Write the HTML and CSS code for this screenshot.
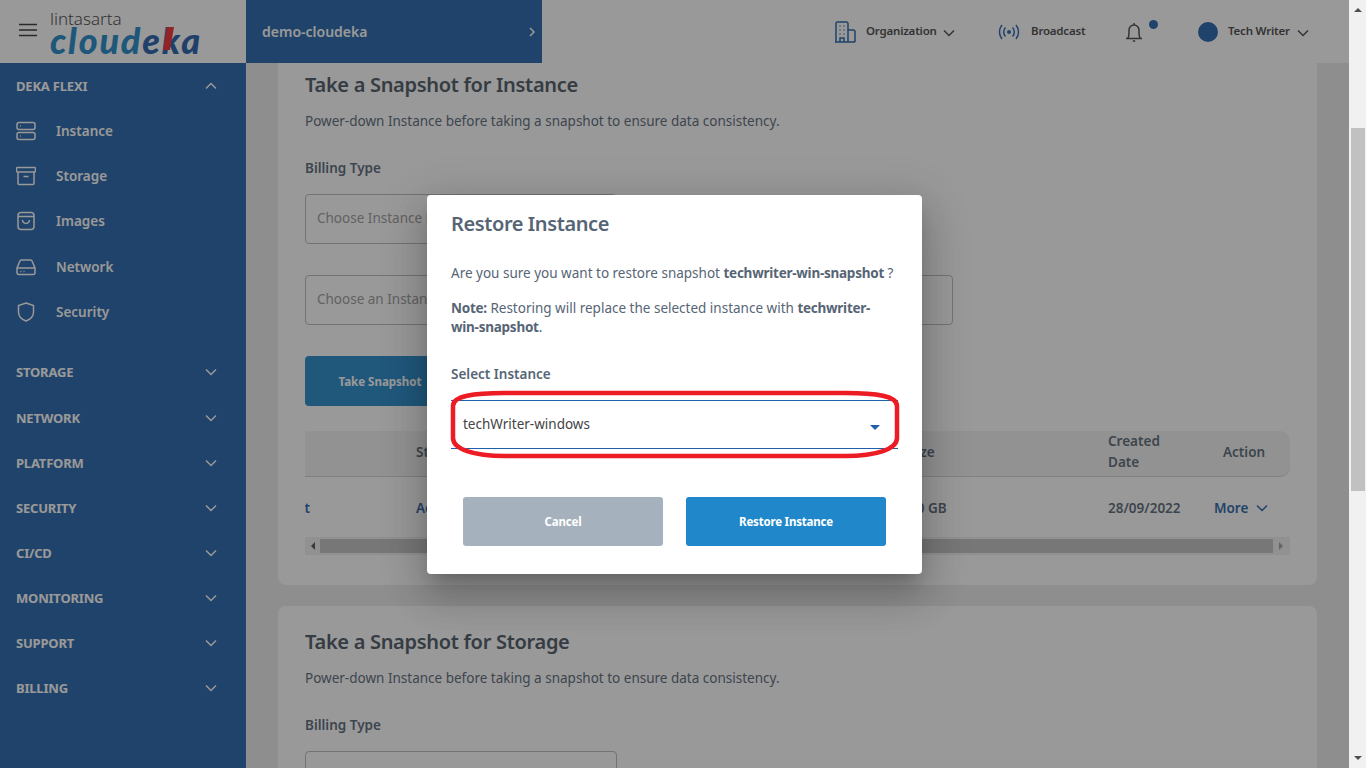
FILE: index.html
```html
<!DOCTYPE html>
<html lang="en">
<head>
    <meta charset="UTF-8">
    <title>Cloudeka - Snapshot</title>
    <link rel="stylesheet" href="styles.css">
</head>
<body>
    <div class="app">
        <header class="topbar">
            <div class="brand">
                <svg class="burger" width="20" height="14" viewBox="0 0 20 14"><path d="M1 1.500h18M1 7h18M1 12.500h18"/></svg>
                <div class="logo">
                    <span class="logo-top">lintasarta</span>
                    <span class="logo-main">cloud<span class="logo-dark">e<span class="logo-k">k</span>a</span></span>
                </div>
            </div>
            <div class="project">
                <span>demo-cloudeka</span>
                <svg width="8" height="12" viewBox="0 0 8 12"><path d="M2 2l4 4-4 4"/></svg>
            </div>
            <nav class="topnav">
                <div class="topnav-item org">
                    <svg class="blue-icon" width="22" height="22" viewBox="0 0 22 22"><path d="M2 21V2.500A1.500 1.500 0 0 1 3.500 1h9A1.500 1.500 0 0 1 14 2.500V21M14 9h5a2 2 0 0 1 2 2v10M1 21h20M6 21v-4h4v4M5.500 5h1M9.500 5h1M5.500 9h1M9.500 9h1M5.500 13h1M9.500 13h1"/></svg>
                    <span>Organization</span>
                    <svg class="chev" width="12" height="8" viewBox="0 0 12 8"><path d="M1 1.500l5 5 5-5"/></svg>
                </div>
                <div class="topnav-item cast">
                    <svg class="blue-icon" width="22" height="16" viewBox="0 0 22 16"><circle class="dot" cx="11" cy="8" r="2"/><path d="M7.500 3.500a6.500 6.500 0 0 0 0 9M14.500 3.500a6.500 6.500 0 0 1 0 9M4 1a11 11 0 0 0 0 14M18 1a11 11 0 0 1 0 14"/></svg>
                    <span>Broadcast</span>
                </div>
                <div class="bell">
                    <svg width="18" height="22" viewBox="0 0 18 22"><path d="M1 17.500h16M2.800 17.500c1-1.500 1.200-3 1.200-5.500V9a5 5 0 0 1 10 0v3c0 2.500.2 4 1.200 5.500M9 2v2M7.800 20h2.400"/></svg>
                    <i class="bell-dot"></i>
                </div>
                <div class="topnav-item user">
                    <i class="avatar"></i>
                    <span>Tech Writer</span>
                    <svg class="chev" width="12" height="8" viewBox="0 0 12 8"><path d="M1 1.500l5 5 5-5"/></svg>
                </div>
            </nav>
        </header>

        <div class="layout">
            <aside class="sidebar">
                <div class="side-group">DEKA FLEXI
                    <svg width="12" height="8" viewBox="0 0 12 8"><path d="M1 6.500l5-5 5 5"/></svg>
                </div>
                <div class="side-item">
                    <svg width="20" height="20" viewBox="0 0 20 20"><rect x="1" y="1.500" width="18" height="7" rx="2"/><rect x="1" y="11.500" width="18" height="7" rx="2"/><path d="M4 5h.800M4 15h.800"/></svg>
                    Instance
                </div>
                <div class="side-item">
                    <svg width="20" height="20" viewBox="0 0 20 20"><rect x="0.500" y="1.500" width="19" height="4.500" rx="1"/><path d="M2 6v11.500a1 1 0 0 0 1 1h14a1 1 0 0 0 1-1V6M7.500 10.500h5"/></svg>
                    Storage
                </div>
                <div class="side-item">
                    <svg width="20" height="20" viewBox="0 0 20 20"><rect x="2" y="1.500" width="16" height="17" rx="3"/><path d="M2 5.500h16M6.500 9c.500 4.500 6.500 4.500 7 0"/></svg>
                    Images
                </div>
                <div class="side-item">
                    <svg width="20" height="20" viewBox="0 0 20 20"><path d="M1 11l2.700-6.500A2 2 0 0 1 5.500 3h9a2 2 0 0 1 1.800 1.500L19 11v4.500a2 2 0 0 1-2 2H3a2 2 0 0 1-2-2zM1 11h18M4.500 14.500h1M7.500 14.500h1"/></svg>
                    Network
                </div>
                <div class="side-item">
                    <svg width="20" height="20" viewBox="0 0 20 20"><path d="M10 1l7.500 2.500v6.500c0 4.500-3.500 7.500-7.500 9-4-1.500-7.500-4.500-7.500-9V3.500z"/></svg>
                    Security
                </div>
                <div class="side-group first-closed">STORAGE <svg width="12" height="8" viewBox="0 0 12 8"><path d="M1 1.500l5 5 5-5"/></svg></div>
                <div class="side-group">NETWORK <svg width="12" height="8" viewBox="0 0 12 8"><path d="M1 1.500l5 5 5-5"/></svg></div>
                <div class="side-group">PLATFORM <svg width="12" height="8" viewBox="0 0 12 8"><path d="M1 1.500l5 5 5-5"/></svg></div>
                <div class="side-group">SECURITY <svg width="12" height="8" viewBox="0 0 12 8"><path d="M1 1.500l5 5 5-5"/></svg></div>
                <div class="side-group">CI/CD <svg width="12" height="8" viewBox="0 0 12 8"><path d="M1 1.500l5 5 5-5"/></svg></div>
                <div class="side-group">MONITORING <svg width="12" height="8" viewBox="0 0 12 8"><path d="M1 1.500l5 5 5-5"/></svg></div>
                <div class="side-group">SUPPORT <svg width="12" height="8" viewBox="0 0 12 8"><path d="M1 1.500l5 5 5-5"/></svg></div>
                <div class="side-group">BILLING <svg width="12" height="8" viewBox="0 0 12 8"><path d="M1 1.500l5 5 5-5"/></svg></div>
            </aside>

            <main class="content">
                <section class="card">
                    <h2>Take a Snapshot for Instance</h2>
                    <p class="hint">Power-down Instance before taking a snapshot to ensure data consistency.</p>
                    <label class="field-label">Billing Type</label>
                    <div class="input billing">Choose Instance Billing Type</div>
                    <div class="input instance">Choose an Instance</div>
                    <button class="snap-btn">Take Snapshot</button>
                    <div class="table-wrap">
                        <div class="table-inner">
                            <div class="t-row t-head">
                                <span>Name</span>
                                <span>Status</span>
                                <span>Instance</span>
                                <span>Size</span>
                                <span>Created<br>Date</span>
                                <span class="t-action">Action</span>
                            </div>
                            <div class="t-row t-body">
                                <span class="t-name">techwriter-win-snapshot</span>
                                <span class="t-status">Active</span>
                                <span>techWriter-windows</span>
                                <span>60 GB</span>
                                <span>28/09/2022</span>
                                <span class="t-more">More
                                    <svg width="12" height="8" viewBox="0 0 12 8"><path d="M1 1.500l5 5 5-5"/></svg>
                                </span>
                            </div>
                        </div>
                    </div>
                    <div class="hscroll">
                        <i class="arrow-left"></i>
                        <div class="hscroll-thumb"></div>
                        <i class="arrow-right"></i>
                    </div>
                </section>
                <section class="card second">
                    <h2>Take a Snapshot for Storage</h2>
                    <p class="hint">Power-down Instance before taking a snapshot to ensure data consistency.</p>
                    <label class="field-label">Billing Type</label>
                    <div class="input billing"></div>
                </section>
            </main>
        </div>

        <div class="overlay">
            <div class="modal">
                <h3>Restore Instance</h3>
                <p class="modal-text">Are you sure you want to restore snapshot <b>techwriter-win-snapshot</b> ?</p>
                <p class="modal-note"><b>Note:</b> Restoring will replace the selected instance with <b>techwriter-win-snapshot</b>.</p>
                <label class="modal-label">Select Instance</label>
                <div class="select">
                    <span>techWriter-windows</span>
                    <i class="select-arrow"></i>
                </div>
                <div class="modal-actions">
                    <button class="btn btn-cancel">Cancel</button>
                    <button class="btn btn-restore">Restore Instance</button>
                </div>
                <svg class="marker" width="495" height="379" viewBox="0 0 495 379"><path d="M78 198H418C450 198 470 201 470 211V243C470 254 450 261 418 261H78C46 261 26 254 26 243V211C26 201 46 198 78 198Z"/></svg>
            </div>
        </div>
    </div>

    <div class="vscroll">
        <i class="arrow-up"></i>
        <div class="vscroll-thumb"></div>
        <i class="arrow-down"></i>
    </div>
</body>
</html>
```

FILE: styles.css
```css
* {
    margin: 0;
    padding: 0;
    box-sizing: border-box;
}

body {
    font-family: "Noto Sans", sans-serif;
    display: flex;
    width: 1366px;
    height: 768px;
    overflow: hidden;
    background-color: #f1f1f1;
    color: #566575;
}

svg {
    fill: none;
    stroke: currentColor;
    stroke-width: 1.5;
    flex-shrink: 0;
}

.app {
    position: relative;
    width: 1349px;
    height: 768px;
    overflow: hidden;
    background-color: #ebebeb;
}

/* top bar */
.topbar {
    display: flex;
    height: 63px;
    background-color: #fff;
}

.brand {
    display: flex;
    align-items: center;
    width: 246px;
    padding-left: 18px;
    gap: 12px;
}

.burger {
    color: #333;
    margin-top: -3px;
}

.logo {
    display: flex;
    flex-direction: column;
    margin-top: 1px;
}

.logo-top {
    font-size: 17px;
    line-height: 17px;
    color: #444;
    font-weight: 300;
}

.logo-main {
    font-family: Lato, sans-serif;
    font-size: 36px;
    line-height: 27px;
    font-weight: 900;
    font-style: italic;
    letter-spacing: 1.8px;
    color: #1a86c5;
}

.logo-dark {
    color: #1f5ca8;
}

.logo-k {
    position: relative;
}

.logo-k::before {
    content: "";
    position: absolute;
    left: 3px;
    top: 9px;
    width: 7px;
    height: 23px;
    background-color: #f0282c;
    transform: skewX(-10deg);
}

.project {
    display: flex;
    align-items: center;
    justify-content: space-between;
    width: 296px;
    padding: 0 6px 0 16px;
    background-color: #1f60a8;
    color: #fff;
    font-size: 14px;
    font-weight: 600;
}

.topnav {
    display: flex;
    align-items: center;
    flex: 1;
    padding-left: 292px;
    font-size: 11.5px;
    letter-spacing: -0.2px;
    font-weight: 600;
    color: #444;
}

.topnav-item {
    display: flex;
    align-items: center;
}

.topnav-item span {
    margin-top: -2px;
}

.org {
    gap: 10px;
    width: 164px;
}

.org .chev {
    margin-left: -4px;
}

.cast {
    gap: 11px;
    width: 127px;
}

.blue-icon {
    color: #1f60a8;
}

.dot {
    fill: #1f60a8;
    stroke: none;
}

.chev {
    color: #444;
    margin-top: 3px;
}

.bell {
    position: relative;
    width: 73px;
    height: 22px;
    color: #444;
}

.bell-dot {
    position: absolute;
    top: -1px;
    left: 24px;
    width: 9px;
    height: 9px;
    border-radius: 50%;
    background-color: #1f60a8;
}

.user {
    gap: 10px;
}

.user .chev {
    margin-left: -3px;
}

.avatar {
    width: 20px;
    height: 20px;
    border-radius: 50%;
    background-color: #1f60a8;
}

/* sidebar */
.layout {
    display: flex;
    height: 705px;
}

.sidebar {
    width: 246px;
    background-color: #1f60a8;
    color: #fff;
    font-size: 13.5px;
    font-weight: 600;
}

.side-group {
    display: flex;
    align-items: center;
    justify-content: space-between;
    height: 45.15px;
    padding: 0 29px 0 16px;
    font-size: 13px;
    letter-spacing: -0.2px;
    font-weight: 700;
}

.side-item {
    display: flex;
    align-items: center;
    height: 45.3px;
    padding-left: 16px;
    gap: 20px;
}

.first-closed {
    margin-top: 15.3px;
}

/* page content */
.content {
    flex: 1;
    padding: 0 32px;
    overflow: hidden;
}

.card {
    height: 522px;
    padding: 9px 27px 0;
    background-color: #fff;
    border-radius: 0 0 8px 8px;
    margin-bottom: 21px;
}

.card.second {
    height: 300px;
    padding-top: 23px;
    border-radius: 8px 8px 0 0;
}

.card h2 {
    font-size: 20px;
    line-height: 26px;
    letter-spacing: -0.3px;
    font-weight: 600;
    color: #46535f;
}

.hint {
    margin-top: 13px;
    font-size: 13.5px;
    line-height: 20px;
}

.field-label {
    display: block;
    margin-top: 27px;
    font-size: 13.5px;
    line-height: 20px;
    font-weight: 600;
}

.input {
    display: flex;
    align-items: center;
    height: 50px;
    padding: 0 0 3px 11px;
    border: 1px solid #b9b9b9;
    border-radius: 4px;
    font-size: 13.5px;
    color: #999;
}

.billing {
    width: 312px;
    margin-top: 16px;
}

.instance {
    width: 648px;
    margin-top: 31px;
}

.snap-btn {
    display: block;
    width: 150px;
    height: 50px;
    margin-top: 31px;
    border: none;
    border-radius: 4px;
    background-color: #2088ca;
    color: #fff;
    font-family: inherit;
    font-size: 11.5px;
    font-weight: 700;
}

.table-wrap {
    margin-top: 25px;
    overflow: hidden;
}

.table-inner {
    margin-left: -160px;
}

.t-row {
    display: grid;
    grid-template-columns: 271px 200px 293px 199px 106px 115px;
    align-items: center;
    font-size: 13.5px;
    font-weight: 600;
}

.t-head {
    height: 46px;
    padding-bottom: 5px;
    line-height: 21px;
    background-color: #f0f3f1;
    border-bottom: 1px solid #cfd3d0;
    border-radius: 0 10px 10px 0;
}

.t-body {
    height: 60px;
    padding-top: 2px;
}

.t-name,
.t-status,
.t-more {
    color: #1f60a8;
}

.t-name {
    margin-left: 3px;
}

.t-action {
    padding-left: 9px;
}

.t-more {
    display: flex;
    align-items: center;
    gap: 8px;
}

.hscroll {
    display: flex;
    align-items: center;
    height: 18px;
    background-color: #f1f1f1;
}

.arrow-left,
.arrow-right {
    width: 0;
    height: 0;
    border-top: 4px solid transparent;
    border-bottom: 4px solid transparent;
}

.arrow-left {
    margin: 0 5px 0 6px;
    border-right: 4px solid #505050;
}

.arrow-right {
    margin: 0 7px 0 6px;
    border-left: 4px solid #a0a0a0;
}

.hscroll-thumb {
    flex: 1;
    height: 14px;
    background-color: #c1c1c1;
}

/* restore dialog */
.overlay {
    position: absolute;
    inset: 0;
    display: flex;
    align-items: center;
    justify-content: center;
    background-color: rgba(33, 33, 33, 0.46);
}

.modal {
    position: relative;
    width: 495px;
    height: 379px;
    padding: 16px 24px 0;
    background-color: #fff;
    border-radius: 4px;
    box-shadow: 0 11px 15px -7px rgba(0, 0, 0, 0.2), 0 24px 38px 3px rgba(0, 0, 0, 0.14), 0 9px 46px 8px rgba(0, 0, 0, 0.12);
}

.modal h3 {
    font-size: 20px;
    line-height: 26px;
    letter-spacing: -0.4px;
    font-weight: 600;
}

.modal-text {
    margin-top: 26px;
    font-size: 13.5px;
    line-height: 20px;
}

.modal-text b,
.modal-note b {
    letter-spacing: -0.25px;
}

.modal-note {
    margin-top: 16px;
    padding-right: 10px;
    font-size: 13.5px;
    line-height: 19px;
}

.modal-label {
    display: block;
    margin-top: 27px;
    font-size: 13.5px;
    line-height: 20px;
    font-weight: 600;
}

.select {
    display: flex;
    align-items: center;
    justify-content: space-between;
    height: 49px;
    margin-top: 16px;
    padding: 0 18px 0 12px;
    border-top: 1px solid #1f60a8;
    border-bottom: 1px solid #1f60a8;
    font-size: 13.5px;
    color: #444;
}

.select-arrow {
    width: 0;
    height: 0;
    margin-top: 7px;
    border-left: 5px solid transparent;
    border-right: 5px solid transparent;
    border-top: 5px solid #1f60a8;
}

.modal-actions {
    display: flex;
    justify-content: space-between;
    margin: 48px 12px 0;
}

.btn {
    width: 200px;
    height: 49px;
    border: none;
    border-radius: 3px;
    color: #fff;
    font-family: inherit;
    font-size: 11.5px;
    letter-spacing: -0.2px;
    font-weight: 700;
}

.btn-cancel {
    background-color: #a5b2bd;
}

.btn-restore {
    background-color: #2088ca;
}

.marker {
    position: absolute;
    top: 0;
    left: 0;
    color: #ed1c24;
    stroke-width: 4.5;
    pointer-events: none;
}

/* page scrollbar */
.vscroll {
    display: flex;
    flex-direction: column;
    width: 17px;
    height: 768px;
    padding: 8px 0;
    background-color: #f1f1f1;
}

.arrow-up,
.arrow-down {
    display: block;
    width: 0;
    height: 0;
    margin: 0 auto;
    border-left: 4px solid transparent;
    border-right: 4px solid transparent;
}

.arrow-up {
    border-bottom: 4px solid #505050;
}

.arrow-down {
    margin-top: auto;
    border-top: 4px solid #505050;
}

.vscroll-thumb {
    width: 14px;
    height: 363px;
    margin: 116px 0 0 2px;
    background-color: #c1c1c1;
}
```
